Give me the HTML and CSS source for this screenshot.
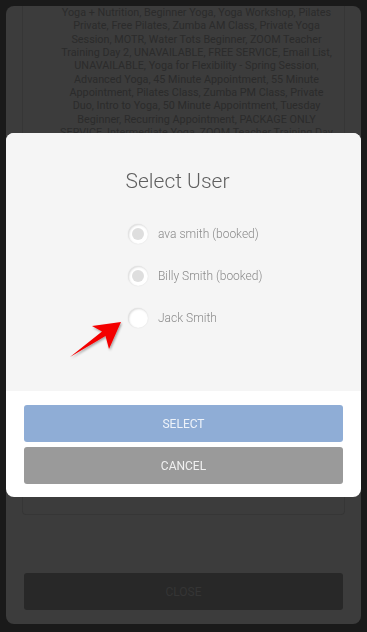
FILE: index.html
```html
<!DOCTYPE html>
<html lang="en">
<head>
    <meta charset="UTF-8">
    <meta name="viewport" content="width=device-width, initial-scale=1.0">
    <title>Select User</title>
    <link rel="stylesheet" href="styles.css">
</head>
<body>
    <div class="screen">
        <div class="card">
            <div class="services">
                <p class="service-list">
                    Yoga + Nutrition, Beginner Yoga, Yoga Workshop, Pilates<br>
                    Private, Free Pilates, Zumba AM Class, Private Yoga<br>
                    Session, MOTR, Water Tots Beginner, ZOOM Teacher<br>
                    Training Day 2, UNAVAILABLE, FREE SERVICE, Email List,<br>
                    UNAVAILABLE, Yoga for Flexibility - Spring Session,<br>
                    Advanced Yoga, 45 Minute Appointment, 55 Minute<br>
                    Appointment, Pilates Class, Zumba PM Class, Private<br>
                    Duo, Intro to Yoga, 50 Minute Appointment, Tuesday<br>
                    Beginner, Recurring Appointment, PACKAGE ONLY<br>
                    SERVICE, Intermediate Yoga, ZOOM Teacher Training Day<br>
                    1, Private Pilates, Pilates Mat Class
                </p>
            </div>
            <div class="close-row">
                <button class="button button-close">CLOSE</button>
            </div>
        </div>
    </div>

    <div class="modal">
        <div class="modal-content">
            <div class="modal-body">
                <h2 class="modal-title">Select User</h2>
                <ul class="user-list">
                    <li class="user-row">
                        <span class="radio booked"></span>
                        <span class="user-name">ava smith (booked)</span>
                    </li>
                    <li class="user-row">
                        <span class="radio booked"></span>
                        <span class="user-name">Billy Smith (booked)</span>
                    </li>
                    <li class="user-row">
                        <span class="radio"></span>
                        <span class="user-name">Jack Smith</span>
                    </li>
                </ul>
            </div>
            <div class="modal-footer">
                <button class="button button-select">SELECT</button>
                <button class="button button-cancel">CANCEL</button>
            </div>
        </div>
    </div>

    <svg class="pointer" width="367" height="632" viewBox="0 0 367 632">
        <defs>
            <filter id="arrowShadow" x="-20%" y="-20%" width="140%" height="140%">
                <feDropShadow dx="1" dy="1.5" stdDeviation="1.2" flood-color="#000" flood-opacity="0.35"/>
            </filter>
        </defs>
        <polygon points="121,322 92,326 102,331.5 70,357 105.5,336 109,349" fill="#f40000" filter="url(#arrowShadow)"/>
    </svg>
</body>
</html>
```

FILE: styles.css
```css
body {
    font-family: Roboto, "Liberation Sans", sans-serif;
    margin: 0;
    padding: 0;
    background-color: #1a1a1a;
    width: 367px;
    height: 632px;
    overflow: hidden;
}

.screen {
    height: 632px;
    padding: 6px 6px 8px;
    box-sizing: border-box;
}

.card {
    height: 100%;
    background-color: #3c3c3c;
    border-radius: 8px;
    display: flex;
    flex-direction: column;
    overflow: hidden;
}

.services {
    height: 509px;
    margin: 0 16px;
    border: 1px solid #363636;
    border-top: none;
    border-radius: 0 0 4px 4px;
    box-sizing: border-box;
    padding: 0 0 0 26px;
    overflow: hidden;
}

.service-list {
    margin: 0;
    font-size: 10.8px;
    line-height: 13.33px;
    text-align: center;
    color: #2b2b2b;
}

.close-row {
    margin-top: auto;
    padding: 0 18px 14px;
}

.button {
    display: block;
    width: 100%;
    height: 37px;
    border: none;
    border-radius: 3px;
    font-family: Roboto, "Liberation Sans", sans-serif;
    font-size: 12px;
    cursor: pointer;
}

.button-close {
    background-color: #282828;
    color: #353535;
}

.modal {
    position: fixed;
    left: 0;
    top: 0;
    width: 100%;
    height: 100%;
    display: flex;
    align-items: center;
    justify-content: center;
}

.modal-content {
    width: 355px;
    margin-top: -2px;
    border-radius: 8px;
    overflow: hidden;
    background-color: #fff;
}

.modal-body {
    height: 258px;
    background-color: #f5f5f5;
    box-sizing: border-box;
    padding-top: 36px;
}

.modal-title {
    margin: 0;
    padding-right: 12px;
    font-size: 21px;
    line-height: 24px;
    font-weight: 300;
    color: #5f5f5f;
    text-align: center;
}

.user-list {
    list-style: none;
    margin: 20px 0 0;
    padding: 0 0 0 122px;
}

.user-row {
    height: 42px;
    display: flex;
    align-items: center;
    gap: 10px;
}

.radio {
    width: 20px;
    height: 20px;
    border-radius: 50%;
    background-color: #fff;
    box-shadow: inset 1px 1px 2px rgba(0, 0, 0, 0.14), 0 0 1.5px rgba(0, 0, 0, 0.1);
    display: flex;
    align-items: center;
    justify-content: center;
}

.radio.booked::after {
    content: "";
    width: 12px;
    height: 12px;
    border-radius: 50%;
    background-color: #dedede;
}

.user-name {
    font-size: 12px;
    font-weight: 300;
    color: #8a8a8a;
}

.modal-footer {
    padding: 14px 18px 13px;
    display: flex;
    flex-direction: column;
    gap: 5px;
}

.button-select {
    background-color: #8fadd6;
    color: #eef3fa;
}

.button-cancel {
    background-color: #9a9a9a;
    color: #f0f0f0;
}

.pointer {
    position: absolute;
    left: 0;
    top: 0;
    pointer-events: none;
}
```
